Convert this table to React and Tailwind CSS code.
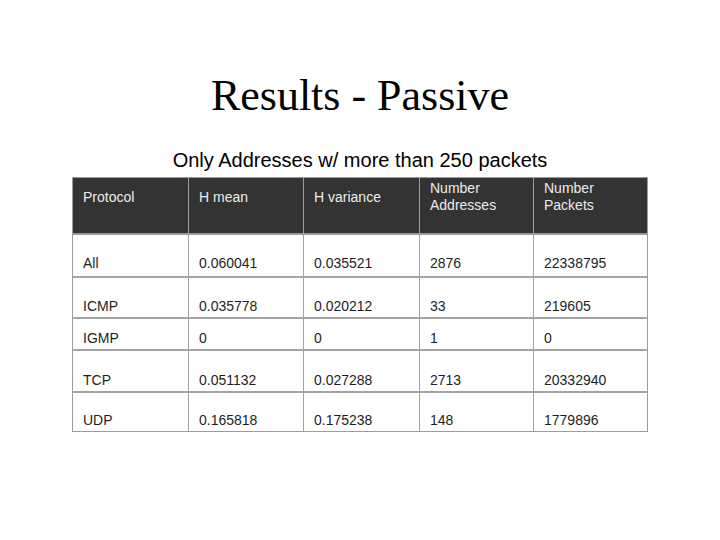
import React from 'react';

const columns = [
  { key: 'protocol', label: ['Protocol'] },
  { key: 'mean', label: ['H mean'] },
  { key: 'variance', label: ['H variance'] },
  { key: 'addresses', label: ['Number', 'Addresses'] },
  { key: 'packets', label: ['Number', 'Packets'] },
];

// row heights follow the slide, rows are not all the same
const rows = [
  { cells: ['All', '0.060041', '0.035521', '2876', '22338795'], h: 'h-[43px]', pb: 'pb-[5px]' },
  { cells: ['ICMP', '0.035778', '0.020212', '33', '219605'], h: 'h-[41px]', pb: 'pb-[3px]' },
  { cells: ['IGMP', '0', '0', '1', '0'], h: 'h-[32px]', pb: 'pb-[3px]' },
  { cells: ['TCP', '0.051132', '0.027288', '2713', '20332940'], h: 'h-[42px]', pb: 'pb-[3px]' },
  { cells: ['UDP', '0.165818', '0.175238', '148', '1779896'], h: 'h-[38px]', pb: 'pb-[3px]' },
];

const grid = 'grid grid-cols-[116px_115px_116px_114px_113px]';

const App = () => {
  return (
    <div className="w-[720px] h-[540px] bg-white flex flex-col items-center pt-[71px] font-['Liberation_Sans',Arial,sans-serif]">
      <h1 className="h-[50px] leading-[50px] text-[44px] text-black font-['Liberation_Serif','Times_New_Roman',serif]">
        Results - Passive
      </h1>
      <p className="mt-[27px] h-[24px] leading-[24px] text-[20px] text-black">
        Only Addresses w/ more than 250 packets
      </p>

      <div className="mt-[5px] w-[576px] border border-[#9d9d9d] text-[14px]">
        {/* header */}
        <div className={`${grid} h-[57px] bg-[#333333] border-b-2 border-[#9d9d9d]`}>
          {columns.map((col, i) => (
            <div
              key={col.key}
              className={`pl-[10px] pt-[2px] text-[#ececec] ${i < columns.length - 1 ? 'border-r border-[#9d9d9d]' : ''}`}
            >
              <div className="h-[34px] flex flex-col justify-center leading-[17px]">
                {col.label.map((line) => (
                  <span key={line}>{line}</span>
                ))}
              </div>
            </div>
          ))}
        </div>

        {/* body */}
        {rows.map((row, r) => (
          <div
            key={row.cells[0]}
            className={`${grid} ${row.h} ${r < rows.length - 1 ? 'border-b-2 border-[#a3a3a3]' : ''}`}
          >
            {row.cells.map((cell, i) => (
              <div
                key={i}
                className={`flex items-end pl-[10px] ${row.pb} leading-[16px] text-[#1e1e1e] ${i < row.cells.length - 1 ? 'border-r border-[#a3a3a3]' : ''}`}
              >
                {cell}
              </div>
            ))}
          </div>
        ))}
      </div>
    </div>
  );
};

export default App;
